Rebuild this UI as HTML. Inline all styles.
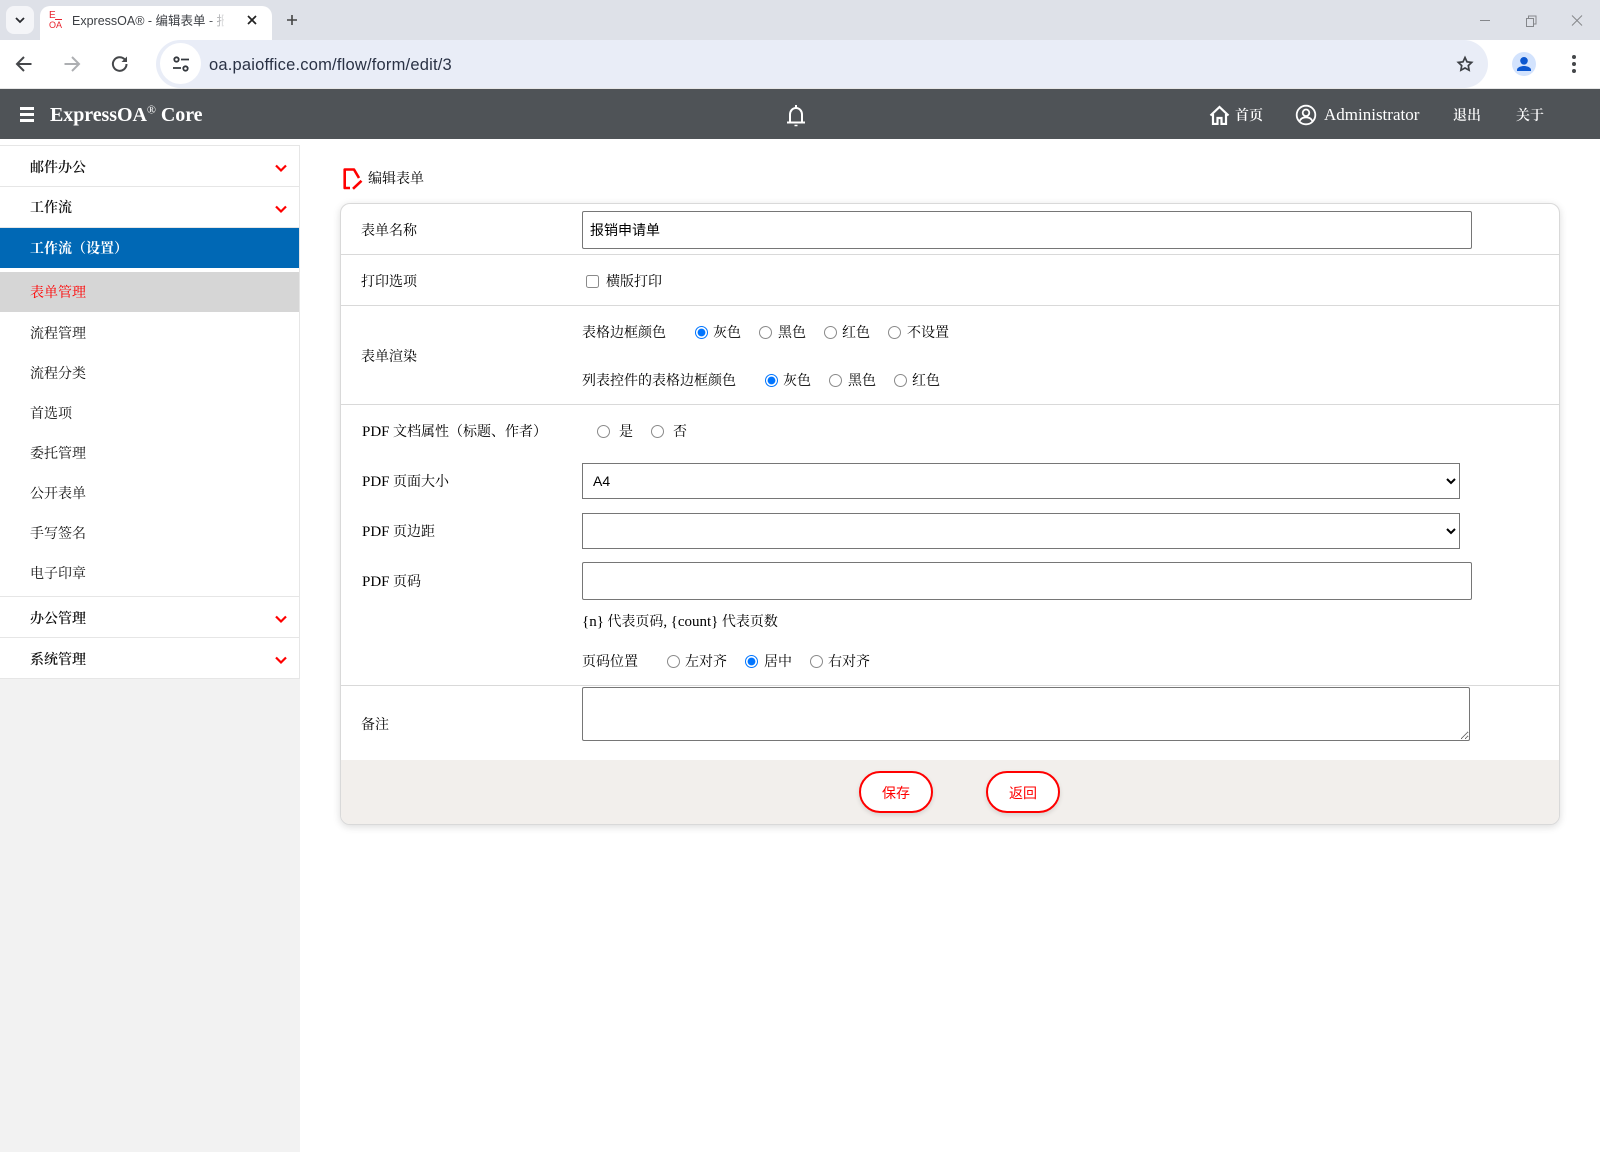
<!DOCTYPE html>
<html lang="zh"><head><meta charset="utf-8"><title>ExpressOA - 编辑表单</title>
<style>
html,body{margin:0;padding:0;width:1600px;height:1152px;overflow:hidden;background:#fff}
body{position:relative;font-family:"Liberation Serif","Noto Serif CJK SC",serif;font-size:14px;color:#000}
.a{position:absolute}
.t{position:absolute;line-height:20px;white-space:nowrap;margin-top:2px}
.l{font-size:15px}
.hd{color:#fff;font-size:14px;font-weight:600}
.m{left:30px;color:#111}
.b{position:absolute;left:0;width:299px;height:1px;background:#e6e6e6}
.c{position:absolute;left:340px;width:1220px;height:1px;background:#d9d9d9}
input,select,textarea{position:absolute;margin:0;box-sizing:border-box}
input[type=radio],input[type=checkbox]{width:13px;height:13px}
input[type=radio]:not(:checked),input[type=checkbox]{opacity:.85}
.tx{border:1px solid #767676;border-radius:2px;background:#fff;font:14px "Liberation Sans","Noto Sans CJK SC",sans-serif;color:#000;padding:0 7px;outline:0}
select.tx{padding:0 0 0 6px;border-radius:0}
.btn{position:absolute;top:771px;width:74px;height:42px;box-sizing:border-box;border:2px solid #f00;border-radius:21px;background:#fff;color:#f00;text-align:center;font:14px/40px "Liberation Sans","Noto Sans CJK SC",sans-serif;box-shadow:0 2px 5px rgba(0,0,0,.12)}
</style></head><body>

<!-- browser chrome -->
<div class="a" style="left:0;top:0;width:1600px;height:40px;background:#dee1e8"></div>
<div class="a" style="left:6px;top:6px;width:28px;height:28px;background:#f4f5f8;border-radius:8px"></div>
<svg class="a" style="left:14px;top:14px" width="12" height="12" viewBox="0 0 12 12"><path d="M2 4l4 4 4-4" fill="none" stroke="#2a2c30" stroke-width="1.8"/></svg>
<div class="a" style="left:40px;top:6px;width:232px;height:36px;background:#fff;border-radius:10px 10px 0 0"></div>
<div class="t" style="left:49px;top:11px;margin:0;font:10px/10px 'Liberation Sans',sans-serif;color:#e8222c">E</div>
<div class="a" style="left:55px;top:19px;width:7px;height:1px;background:#e8222c"></div>
<div class="t" style="left:49px;top:20px;margin:0;font:9px/10px 'Liberation Sans',sans-serif;color:#e8222c">OA</div>
<div class="t" style="left:72px;top:9px;width:152px;overflow:hidden;font:12.5px/20px 'Liberation Sans','Noto Sans CJK SC',sans-serif;color:#3c3f44">ExpressOA® - 编辑表单 - 报</div>
<div class="a" style="left:208px;top:10px;width:18px;height:20px;background:linear-gradient(90deg,rgba(255,255,255,0),#fff)"></div>
<svg class="a" style="left:246px;top:14px" width="12" height="12" viewBox="0 0 12 12"><path d="M2 2l8 8M10 2l-8 8" stroke="#222" stroke-width="1.7"/></svg>
<svg class="a" style="left:285px;top:13px" width="14" height="14" viewBox="0 0 14 14"><path d="M7 2v10M2 7h10" stroke="#444" stroke-width="1.6"/></svg>
<svg class="a" style="left:1475px;top:14px" width="125" height="14" viewBox="0 0 125 14" fill="none" stroke="#85878b" stroke-width="1"><path d="M5 6.5h10"/><path d="M51.5 4.500h7v8h-7zM53.500 4.500v-2.500h7.500v8h-2.500"/><path d="M97 1.500l10 10M107 1.500l-10 10"/></svg>

<div class="a" style="left:0;top:40px;width:1600px;height:48px;background:#fff;border-radius:10px 10px 0 0"></div>
<div class="a" style="left:0;top:88px;width:1600px;height:1px;background:#e6e6e6"></div>
<div class="a" style="left:156px;top:40px;width:1332px;height:48px;background:#e9edf7;border-radius:24px"></div>
<div class="a" style="left:160px;top:43px;width:41px;height:41px;background:#fff;border-radius:50%"></div>
<svg class="a" style="left:14px;top:54px" width="20" height="20" viewBox="0 0 20 20" fill="none" stroke="#45474a" stroke-width="2"><path d="M17.5 10H3M10 3l-7 7 7 7"/></svg>
<svg class="a" style="left:62px;top:54px" width="20" height="20" viewBox="0 0 20 20" fill="none" stroke="#adafb2" stroke-width="2"><path d="M2.5 10H17M10 3l7 7-7 7"/></svg>
<svg class="a" style="left:110px;top:54px" width="20" height="20" viewBox="0 0 20 20" fill="none" stroke="#45474a" stroke-width="2"><path d="M16.5 10a6.8 6.8 0 1 1-2-4.800L16.500 7"/><path d="M17 2.500V8h-5.500z" stroke="none" fill="#45474a"/></svg>
<svg class="a" style="left:172px;top:55px" width="18" height="18" viewBox="0 0 18 18" fill="none" stroke="#33373d" stroke-width="1.8"><circle cx="4.500" cy="4.500" r="2.200"/><path d="M9 4.500h8M1 13h8"/><circle cx="13.500" cy="13.500" r="2.200"/></svg>
<div class="t" style="left:209px;top:53px;font:16.5px/20px 'Liberation Sans',sans-serif;color:#2a3245;letter-spacing:.2px">oa.paioffice.com/flow/form/edit/3</div>
<svg class="a" style="left:1456px;top:55px" width="18" height="18" viewBox="0 0 18 18" fill="none" stroke="#3d4045" stroke-width="1.700"><path d="M9 2.500l2 4.300 4.700.6-3.400 3.200.8 4.600L9 13l-4.100 2.200.8-4.600-3.400-3.200 4.700-.6z"/></svg>
<div class="a" style="left:1512px;top:52px;width:24px;height:24px;background:#d3e3fd;border-radius:50%;overflow:hidden"></div>
<svg class="a" style="left:1512px;top:52px" width="24" height="24" viewBox="0 0 24 24" fill="#0b57d0"><circle cx="12" cy="8.800" r="3.800"/><path d="M5 19v-1.200c0-2.600 4.400-3.800 7-3.800s7 1.200 7 3.800V19z"/></svg>
<svg class="a" style="left:1570px;top:54px" width="8" height="20" viewBox="0 0 8 20" fill="#44474a"><circle cx="4" cy="3" r="2"/><circle cx="4" cy="10" r="2"/><circle cx="4" cy="17" r="2"/></svg>

<!-- app header -->
<div class="a" style="left:0;top:89px;width:1600px;height:50px;background:#4f5357"></div>
<div class="a" style="left:20px;top:107px;width:14px;height:3px;background:#fff"></div>
<div class="a" style="left:20px;top:113px;width:14px;height:3px;background:#fff"></div>
<div class="a" style="left:20px;top:119px;width:14px;height:3px;background:#fff"></div>
<div class="t" style="left:50px;top:103px;color:#fff;font-size:20px;font-weight:700;letter-spacing:-.06px">ExpressOA<sup style="font-size:12px;line-height:0;font-weight:400">®</sup> Core</div>
<svg class="a" style="left:784px;top:103px" width="24" height="24" viewBox="0 0 24 24" fill="none" stroke="#fff" stroke-width="2"><path d="M6 19V11.500C6 8 8.500 5 12 5s6 3 6 6.500V19"/><path d="M3 19.500h18"/><path d="M10.500 22.500h3" stroke-width="1.500"/><path d="M12 2v3"/></svg>
<svg class="a" style="left:1209px;top:105px" width="21" height="20" viewBox="0 0 21 20" fill="none" stroke="#fff" stroke-width="2.200"><path d="M1.500 10.500L10.500 2l9 8.500"/><path d="M4 9v10h4.500v-6h4v6H17V9"/></svg>
<div class="t hd" style="left:1235px;top:105px">首页</div>
<svg class="a" style="left:1295px;top:104px" width="22" height="22" viewBox="0 0 22 22" fill="none" stroke="#fff" stroke-width="1.800"><circle cx="11" cy="11" r="9.300"/><circle cx="11" cy="8.800" r="3.300"/><path d="M4.500 17.500c1-3 3.500-4.200 6.500-4.200s5.500 1.200 6.500 4.200"/></svg>
<div class="t" style="left:1324px;top:103px;color:#fff;font-size:17px">Administrator</div>
<div class="t hd" style="left:1453px;top:105px">退出</div>
<div class="t hd" style="left:1516px;top:105px">关于</div>

<!-- sidebar -->
<div class="a" style="left:299px;top:145px;width:1px;height:534px;background:#e6e6e6"></div>
<div class="a" style="left:0;top:679px;width:300px;height:473px;background:#f2f2f2"></div>
<div class="b" style="top:145px"></div>
<div class="t m" style="top:157px;font-weight:600">邮件办公</div>
<div class="b" style="top:186px"></div>
<div class="t m" style="top:197px;font-weight:600">工作流</div>
<div class="b" style="top:227px"></div>
<div class="a" style="left:0;top:228px;width:299px;height:40px;background:#0068b5"></div>
<div class="t m" style="top:238px;color:#fff;font-weight:700">工作流（设置）</div>
<div class="a" style="left:0;top:272px;width:299px;height:40px;background:#d6d6d6"></div>
<div class="t m" style="top:282px;color:#f00">表单管理</div>
<div class="t m" style="top:323px">流程管理</div>
<div class="t m" style="top:363px">流程分类</div>
<div class="t m" style="top:403px">首选项</div>
<div class="t m" style="top:443px">委托管理</div>
<div class="t m" style="top:483px">公开表单</div>
<div class="t m" style="top:523px">手写签名</div>
<div class="t m" style="top:563px">电子印章</div>
<div class="b" style="top:596px"></div>
<div class="t m" style="top:608px;font-weight:600">办公管理</div>
<div class="b" style="top:637px"></div>
<div class="t m" style="top:649px;font-weight:600">系统管理</div>
<div class="b" style="top:678px"></div>
<svg class="a" style="left:274px;top:163px" width="14" height="10" viewBox="0 0 14 10" fill="none" stroke="#f00" stroke-width="2.200"><path d="M2 2.500l5 5 5-5"/></svg>
<svg class="a" style="left:274px;top:204px" width="14" height="10" viewBox="0 0 14 10" fill="none" stroke="#f00" stroke-width="2.200"><path d="M2 2.500l5 5 5-5"/></svg>
<svg class="a" style="left:274px;top:614px" width="14" height="10" viewBox="0 0 14 10" fill="none" stroke="#f00" stroke-width="2.200"><path d="M2 2.500l5 5 5-5"/></svg>
<svg class="a" style="left:274px;top:655px" width="14" height="10" viewBox="0 0 14 10" fill="none" stroke="#f00" stroke-width="2.200"><path d="M2 2.500l5 5 5-5"/></svg>

<!-- page title -->
<svg class="a" style="left:343px;top:168px" width="20" height="23" viewBox="0 0 20 23" fill="none" stroke="#f00" stroke-width="2.600" stroke-linejoin="round"><path d="M7 20H1.700V1.500H11L16 10"/><path d="M18.500 12.800L10 20.800"/></svg>
<div class="t" style="left:368px;top:168px">编辑表单</div>

<!-- card -->
<div class="a" style="left:340px;top:203px;width:1220px;height:622px;box-sizing:border-box;border:1px solid #d9d9d9;border-radius:10px;box-shadow:0 2px 8px rgba(0,0,0,.14);background:#fff"></div>
<div class="a" style="left:341px;top:760px;width:1218px;height:64px;background:#f2efec;border-radius:0 0 9px 9px"></div>
<div class="c" style="top:254px"></div>
<div class="c" style="top:305px"></div>
<div class="c" style="top:404px"></div>
<div class="c" style="top:685px"></div>

<div class="t" style="left:361px;top:220px">表单名称</div>
<input class="tx" style="left:582px;top:211px;width:890px;height:38px" value="报销申请单">

<div class="t" style="left:361px;top:271px">打印选项</div>
<input type="checkbox" style="left:585.500px;top:275px">
<div class="t" style="left:606px;top:271px">横版打印</div>

<div class="t" style="left:361px;top:346px">表单渲染</div>
<div class="t" style="left:582px;top:322px">表格边框颜色</div>
<input type="radio" name="a" checked style="left:695px;top:326px">
<div class="t" style="left:713px;top:322px">灰色</div>
<input type="radio" name="a" style="left:759px;top:326px">
<div class="t" style="left:778px;top:322px">黑色</div>
<input type="radio" name="a" style="left:824px;top:326px">
<div class="t" style="left:842px;top:322px">红色</div>
<input type="radio" name="a" style="left:888px;top:326px">
<div class="t" style="left:907px;top:322px">不设置</div>

<div class="t" style="left:582px;top:370px">列表控件的表格边框颜色</div>
<input type="radio" name="b" checked style="left:765px;top:374px">
<div class="t" style="left:783px;top:370px">灰色</div>
<input type="radio" name="b" style="left:829px;top:374px">
<div class="t" style="left:848px;top:370px">黑色</div>
<input type="radio" name="b" style="left:894px;top:374px">
<div class="t" style="left:912px;top:370px">红色</div>

<div class="t" style="left:362px;top:420px"><span class="l">PDF</span> 文档属性（标题、作者）</div>
<input type="radio" name="c" style="left:597px;top:425px">
<div class="t" style="left:619px;top:421px">是</div>
<input type="radio" name="c" style="left:651px;top:425px">
<div class="t" style="left:673px;top:421px">否</div>

<div class="t" style="left:362px;top:470px"><span class="l">PDF</span> 页面大小</div>
<select class="tx" style="left:582px;top:463px;width:878px;height:36px"><option>A4</option></select>
<div class="t" style="left:362px;top:520px"><span class="l">PDF</span> 页边距</div>
<select class="tx" style="left:582px;top:513px;width:878px;height:36px"><option></option></select>
<div class="t" style="left:362px;top:570px"><span class="l">PDF</span> 页码</div>
<input class="tx" style="left:582px;top:562px;width:890px;height:38px">
<div class="t" style="left:582px;top:610px"><span class="l">{n}</span> 代表页码<span class="l">,</span> <span class="l">{count}</span> 代表页数</div>
<div class="t" style="left:582px;top:651px">页码位置</div>
<input type="radio" name="d" style="left:667px;top:655px">
<div class="t" style="left:685px;top:651px">左对齐</div>
<input type="radio" name="d" checked style="left:745px;top:655px">
<div class="t" style="left:764px;top:651px">居中</div>
<input type="radio" name="d" style="left:810px;top:655px">
<div class="t" style="left:828px;top:651px">右对齐</div>

<div class="t" style="left:361px;top:714px">备注</div>
<textarea class="tx" style="left:582px;top:687px;width:888px;height:54px"></textarea>

<div class="btn" style="left:859px">保存</div>
<div class="btn" style="left:986px">返回</div>
</body></html>
